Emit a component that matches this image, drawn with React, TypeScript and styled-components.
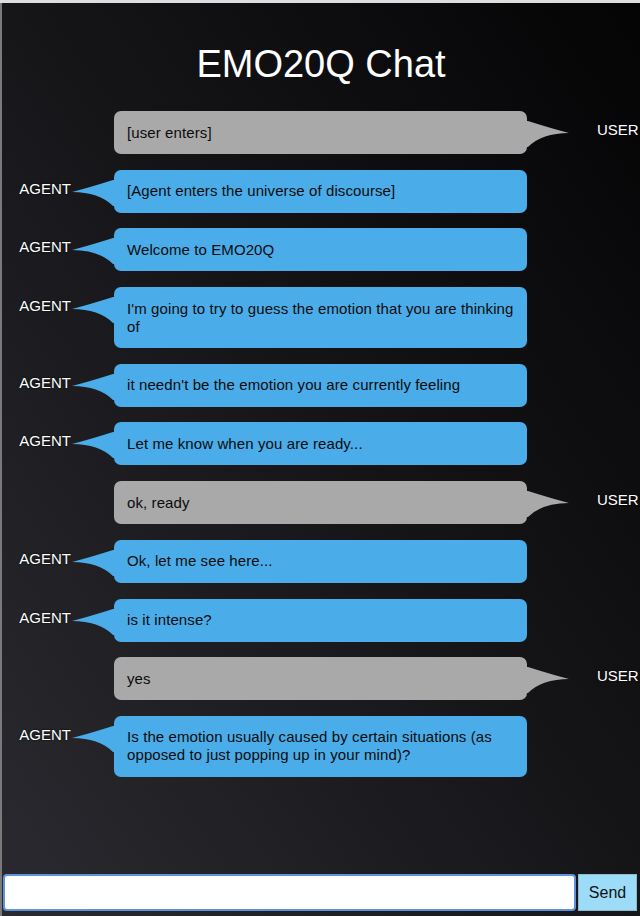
import { createGlobalStyle } from "styled-components";
import styled from "styled-components";

const GlobalStyle = createGlobalStyle`
  html, body {
    margin: 0;
    padding: 0;
    background: #dedede;
  }
  body {
    font-family: "Liberation Sans", Helvetica, Arial, sans-serif;
  }
`;

type Speaker = "agent" | "user";

interface Message {
  from: Speaker;
  text: string;
}

const messages: Message[] = [
  { from: "user", text: "[user enters]" },
  { from: "agent", text: "[Agent enters the universe of discourse]" },
  { from: "agent", text: "Welcome to EMO20Q" },
  {
    from: "agent",
    text: "I'm going to try to guess the emotion that you are thinking of",
  },
  { from: "agent", text: "it needn't be the emotion you are currently feeling" },
  { from: "agent", text: "Let me know when you are ready..." },
  { from: "user", text: "ok, ready" },
  { from: "agent", text: "Ok, let me see here..." },
  { from: "agent", text: "is it intense?" },
  { from: "user", text: "yes" },
  {
    from: "agent",
    text: "Is the emotion usually caused by certain situations (as opposed to just popping up in your mind)?",
  },
];

const Page = styled.div`
  margin-top: 3px;
  height: 913px;
  border-left: 2px solid #7a7a7a;
  box-sizing: border-box;
  background: linear-gradient(to bottom left, #040405 0%, #141417 45%, #2b2a30 100%);
  display: flex;
  flex-direction: column;
  overflow: hidden;
`;

const Title = styled.h1`
  margin: 0;
  padding-top: 39px;
  font-size: 38px;
  line-height: 44px;
  font-weight: normal;
  color: #ffffff;
  text-align: center;
`;

const Thread = styled.div`
  flex: 1;
  display: flex;
  flex-direction: column;
  gap: 15.7px;
  padding-top: 25px;
`;

const Row = styled.div`
  display: grid;
  grid-template-columns: 112px 413px 1fr;
  align-items: start;
`;

const Side = styled.div<{ $align: "start" | "end" }>`
  display: flex;
  align-items: flex-start;
  justify-content: ${(p) => (p.$align === "end" ? "flex-end" : "flex-start")};
  min-width: 0;
`;

const Label = styled.span<{ $gap?: number }>`
  margin-top: 10px;
  margin-left: ${(p) => p.$gap ?? 0}px;
  font-size: 15px;
  line-height: 18px;
  color: #ffffff;
  text-shadow: 0 0 2px #000;
  white-space: nowrap;
`;

const Tail = styled.svg<{ $flip?: boolean }>`
  flex: none;
  margin-top: 8px;
  margin-left: ${(p) => (p.$flip ? "-2px" : "0")};
  margin-right: ${(p) => (p.$flip ? "0" : "-2px")};
  transform: ${(p) => (p.$flip ? "scaleX(-1)" : "none")};
  position: relative;
  z-index: 1;
`;

const Bubble = styled.div<{ $from: Speaker }>`
  box-sizing: border-box;
  padding: 12.5px 13px;
  border-radius: 7px;
  background: ${(p) => (p.$from === "agent" ? "#4aace8" : "#a9a9a9")};
  color: #0c0c0c;
  font-size: 15px;
  line-height: 18px;
  letter-spacing: 0.1px;
`;

const Composer = styled.div`
  display: flex;
  gap: 2px;
  padding: 0 3px 5px 1px;
`;

const Input = styled.input`
  flex: 1;
  height: 37px;
  box-sizing: border-box;
  border: 2px solid #5c93dc;
  border-radius: 4px;
  background: #fff;
  outline: none;
  font-family: inherit;
  font-size: 15px;
`;

const SendButton = styled.button`
  width: 59px;
  height: 37px;
  box-sizing: border-box;
  border: 1px solid #8fb9cc;
  background: #9cdcf9;
  color: #111;
  font-family: inherit;
  font-size: 16px;
  padding: 0;
`;

function TailShape({ fill, flip }: { fill: string; flip?: boolean }) {
  return (
    <Tail $flip={flip} width="45" height="30" viewBox="0 0 45 30">
      <path d="M45 2 L42 2 Q20 9 1 14 Q28 14 42 28 L45 28 Z" fill={fill} />
    </Tail>
  );
}

function ChatRow({ message }: { message: Message }) {
  const fill = message.from === "agent" ? "#4aace8" : "#a9a9a9";
  return (
    <Row>
      <Side $align="end">
        {message.from === "agent" && (
          <>
            <Label>AGENT</Label>
            <TailShape fill={fill} />
          </>
        )}
      </Side>
      <Bubble $from={message.from}>{message.text}</Bubble>
      <Side $align="start">
        {message.from === "user" && (
          <>
            <TailShape fill={fill} flip />
            <Label $gap={27}>USER</Label>
          </>
        )}
      </Side>
    </Row>
  );
}

export default function App() {
  return (
    <>
      <GlobalStyle />
      <Page>
        <Title>EMO20Q Chat</Title>
        <Thread>
          {messages.map((m, i) => (
            <ChatRow key={i} message={m} />
          ))}
        </Thread>
        <Composer>
          <Input type="text" />
          <SendButton>Send</SendButton>
        </Composer>
      </Page>
    </>
  );
}
